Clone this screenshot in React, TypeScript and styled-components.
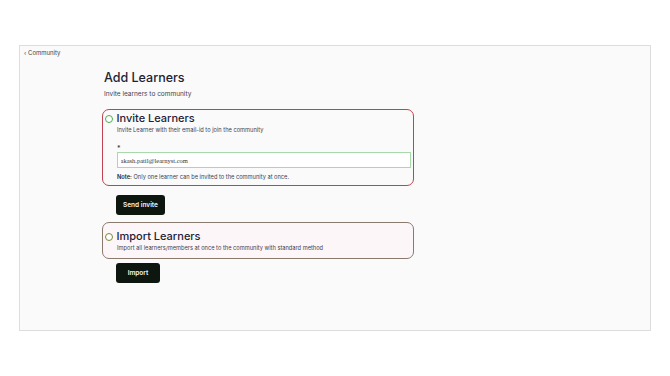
import * as React from "react";
import styled, { createGlobalStyle } from "styled-components";

const GlobalStyle = createGlobalStyle`
  html, body {
    margin: 0;
    padding: 0;
    background: #ffffff;
    font-family: Inter, "Noto Sans", sans-serif;
  }
`;

const App: React.FC = () => {
  const [email, setEmail] = React.useState("akash.patil@learnyst.com");

  return (
    <>
      <GlobalStyle />
      <Page>
        <Frame>
          <BackLink>‹ Community</BackLink>
          <Content>
            <Title>Add Learners</Title>
            <Subtitle>Invite learners to community</Subtitle>

            <OptionCard $tone="invite">
              <OptionHead>
                <Radio $color="#4caf50" />
                <OptionTitle>Invite Learners</OptionTitle>
              </OptionHead>
              <OptionText>Invite Learner with their email-id to join the community</OptionText>
              <FieldLabel>*</FieldLabel>
              <EmailInput
                value={email}
                onChange={e => setEmail(e.target.value)}
              />
              <Note>
                <b>Note:</b> Only one learner can be invited to the community at once.
              </Note>
            </OptionCard>

            <ActionButton>Send invite</ActionButton>

            <OptionCard $tone="import">
              <OptionHead>
                <Radio $color="#7b8a3a" />
                <OptionTitle>Import Learners</OptionTitle>
              </OptionHead>
              <OptionText>
                Import all learners/members at once to the community with standard method
              </OptionText>
            </OptionCard>

            <ActionButton $small>Import</ActionButton>
          </Content>
        </Frame>
      </Page>
    </>
  );
};

const Page = styled.div`
  width: 670px;
  height: 376px;
  padding: 45px 19px 0 19px;
  box-sizing: border-box;
`;

const Frame = styled.div`
  width: 632px;
  height: 286px;
  box-sizing: border-box;
  border: 1.5px solid #dddddd;
  background: #fafafa;
  padding: 3px 4px;
`;

const BackLink = styled.div`
  font-size: 6px;
  color: #444;
  line-height: 8px;
`;

const Content = styled.div`
  margin-left: 78px;
  width: 312px;
  padding-top: 13px;
  display: flex;
  flex-direction: column;
  align-items: flex-start;
`;

const Title = styled.h1`
  margin: 0;
  font-size: 12.5px;
  font-weight: 500;
  color: #1e2235;
  line-height: 16px;
  padding-left: 2px;
`;

const Subtitle = styled.div`
  margin-top: 4px;
  font-size: 6.5px;
  color: #3c4250;
  padding-left: 2px;
`;

const OptionCard = styled.div<{ $tone: "invite" | "import" }>`
  box-sizing: border-box;
  width: 312px;
  margin-top: ${p => (p.$tone === "invite" ? "11px" : "7px")};
  border: 1.5px solid ${p => (p.$tone === "invite" ? "#c0434f" : "#8a7a6e")};
  border-radius: 7px;
  background: ${p => (p.$tone === "invite" ? "#fafafa" : "#fdf6f8")};
  padding: ${p => (p.$tone === "invite" ? "1px 4px 4px 1.5px" : "6px 4px 6px 1.5px")};
`;

const OptionHead = styled.div`
  display: flex;
  align-items: center;
  gap: 4px;
`;

const Radio = styled.span<{ $color: string }>`
  width: 6px;
  height: 6px;
  border: 1.2px solid ${p => p.$color};
  border-radius: 50%;
  background: #fff;
  flex-shrink: 0;
`;

const OptionTitle = styled.div`
  font-size: 11px;
  font-weight: 500;
  color: #1e2235;
  line-height: 15px;
`;

const OptionText = styled.div`
  margin-left: 12.5px;
  font-size: 5.7px;
  color: #3c4250;
  line-height: 8px;
`;

const FieldLabel = styled.div`
  margin: 12px 0 0 12.5px;
  font-size: 7px;
  color: #333;
  line-height: 5px;
  height: 5px;
`;

const EmailInput = styled.input`
  display: block;
  box-sizing: border-box;
  margin: 1px 0 0 12px;
  width: 294px;
  height: 16px;
  border: 1px solid #a9d9a9;
  background: #fff;
  padding: 0 3px;
  font-family: "Liberation Serif", serif;
  font-size: 6.5px;
  color: #333;
  outline: none;
`;

const Note = styled.div`
  margin: 5px 0 0 12.5px;
  font-size: 5.7px;
  color: #3c4250;
  line-height: 8px;

  b {
    font-weight: 600;
    color: #1e2235;
  }
`;

const ActionButton = styled.button<{ $small?: boolean }>`
  margin: ${p => (p.$small ? "4px" : "9px")} 0 0 14px;
  width: ${p => (p.$small ? "44px" : "49px")};
  height: 20px;
  border: none;
  border-radius: 3px;
  background: #0d170f;
  color: #f4f4f4;
  font-family: Inter, sans-serif;
  font-size: 6.5px;
  font-weight: 600;
  cursor: pointer;
`;

export default App;
